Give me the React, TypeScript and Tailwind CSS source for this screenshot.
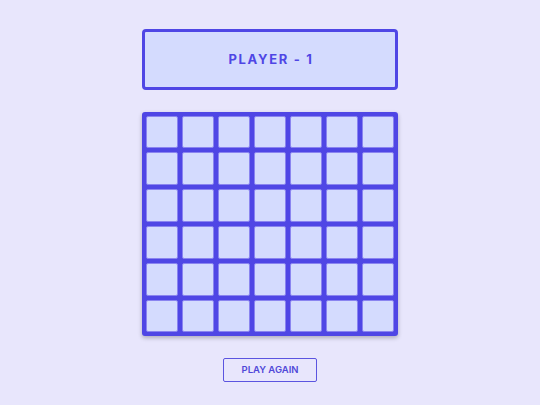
import React, { useState } from "react";

const ROWS = 6;
const COLS = 7;

type Cell = 0 | 1 | 2;

function App() {
  const [board, setBoard] = useState<Cell[][]>(
    Array.from({ length: ROWS }, () => Array<Cell>(COLS).fill(0))
  );
  const [player, setPlayer] = useState<1 | 2>(1);

  const handleDrop = (col: number) => {
    const next = board.map((row) => [...row]);
    for (let r = ROWS - 1; r >= 0; r--) {
      if (next[r][col] === 0) {
        next[r][col] = player;
        setBoard(next);
        setPlayer(player === 1 ? 2 : 1);
        return;
      }
    }
  };

  const handleReset = () => {
    setBoard(Array.from({ length: ROWS }, () => Array<Cell>(COLS).fill(0)));
    setPlayer(1);
  };

  return (
    <div
      className="min-h-[405px] w-full bg-[#e8e6fc] flex flex-col items-center pt-[29px]"
      style={{ fontFamily: "Inter, 'Open Sans', sans-serif" }}
    >
      <div className="w-[256px] h-[61px] border-[3.5px] border-[#4f46e5] rounded-[4px] bg-[#d4dbfe] flex items-center justify-center">
        <h1 className="text-[13px] font-bold tracking-[0.13em] text-[#4f46e5] pl-[2px]">
          PLAYER - {player}
        </h1>
      </div>

      <div className="mt-[22px] w-[256px] h-[224px] bg-[#4f46e5] p-[3.5px] rounded-[3px] grid grid-cols-7 grid-rows-6 gap-[4px] shadow-[0_2px_4px_rgba(0,0,0,0.25)]">
        {board.map((row, r) =>
          row.map((cell, c) => (
            <button
              key={`${r}-${c}`}
              onClick={() => handleDrop(c)}
              className={`rounded-[2px] border border-[#8a84f0] ${
                cell === 1
                  ? "bg-[#ef4444]"
                  : cell === 2
                  ? "bg-[#facc15]"
                  : "bg-[#d4dbfe]"
              }`}
            />
          ))
        )}
      </div>

      <button
        onClick={handleReset}
        className="mt-[22px] w-[94px] h-[24px] border border-[#5b54e0] rounded-[2px] text-[9.5px] font-semibold text-[#5048d8] flex items-center justify-center"
      >
        PLAY AGAIN
      </button>
    </div>
  );
}

export default App;
